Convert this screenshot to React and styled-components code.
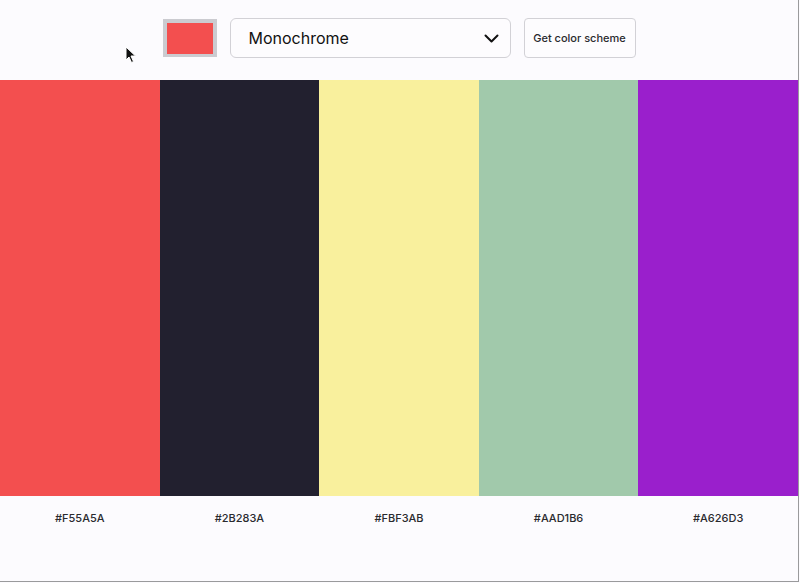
import styled, { createGlobalStyle } from 'styled-components'

const GlobalStyle = createGlobalStyle`
	html, body {
		margin: 0;
		padding: 0;
		background: #fcfbfe;
		font-family: Inter, "Noto Sans", sans-serif;
	}
`

const colors = [
	{ hex: '#F55A5A', shown: '#f34f4f' },
	{ hex: '#2B283A', shown: '#22202f' },
	{ hex: '#FBF3AB', shown: '#f9f09d' },
	{ hex: '#AAD1B6', shown: '#a1c9ab' },
	{ hex: '#A626D3', shown: '#9a1fcc' },
]

export default function App() {
	return (
		<Wrapper>
			<GlobalStyle />
			<Header>
				<ColorPicker>
					<ColorFill $color='#f34f4f' />
				</ColorPicker>
				<Select>
					<span>Monochrome</span>
					<svg width='15' height='9' viewBox='0 0 15 9' fill='none'>
						<path d='M1.5 1.5 L7.5 7.5 L13.5 1.5' stroke='#111' strokeWidth='2' strokeLinecap='round' strokeLinejoin='round' />
					</svg>
				</Select>
				<Button>Get color scheme</Button>
				<Cursor width='12' height='18' viewBox='0 0 12 18'>
					<path d='M1 1 L1 14 L4 11 L6.5 16.5 L8.5 15.5 L6 10 L10.5 10 Z' fill='#111' stroke='#fff' strokeWidth='1' />
				</Cursor>
			</Header>
			<Palette>
				{colors.map((c) => (
					<Column key={c.hex}>
						<Swatch $color={c.shown} />
						<Label>{c.hex}</Label>
					</Column>
				))}
			</Palette>
		</Wrapper>
	)
}

const Wrapper = styled.div`
	width: 798px;
	height: 581px;
	border-right: 1px solid #9a9a9c;
	border-bottom: 1px solid #9a9a9c;
	background: #fcfbfe;
	overflow: hidden;
`

const Header = styled.header`
	position: relative;
	height: 80px;
	display: flex;
	align-items: center;
	justify-content: center;
	gap: 13px;
	padding-bottom: 4px;
	box-sizing: border-box;
`

const ColorPicker = styled.div`
	width: 54px;
	height: 38px;
	box-sizing: border-box;
	padding: 4px 4px 3px 4px;
	background: #cbcbd0;
	margin-top: -1px;
`

const ColorFill = styled.div`
	width: 100%;
	height: 100%;
	background: ${(p) => p.$color};
`

const Select = styled.div`
	width: 281px;
	height: 40px;
	box-sizing: border-box;
	border: 1px solid #d2d1d6;
	border-radius: 6px;
	background: #fdfcfe;
	display: flex;
	align-items: center;
	justify-content: space-between;
	padding: 0 11px 0 18px;
	font-size: 16px;
	color: #111;
`

const Button = styled.button`
	width: 112px;
	height: 40px;
	box-sizing: border-box;
	border: 1px solid #d2d1d6;
	border-radius: 4px;
	background: #fdfcfe;
	font-family: Inter, sans-serif;
	font-size: 11px;
	font-weight: 500;
	color: #2a2a2e;
	padding: 0;
`

const Cursor = styled.svg`
	position: absolute;
	left: 125px;
	top: 46px;
`

const Palette = styled.main`
	display: grid;
	grid-template-columns: repeat(5, 1fr);
`

const Column = styled.div`
	display: flex;
	flex-direction: column;
`

const Swatch = styled.div`
	height: 416px;
	background: ${(p) => p.$color};
`

const Label = styled.p`
	margin: 0;
	padding-top: 15px;
	text-align: center;
	font-size: 11px;
	font-weight: 500;
	color: #2a2a2e;
`
